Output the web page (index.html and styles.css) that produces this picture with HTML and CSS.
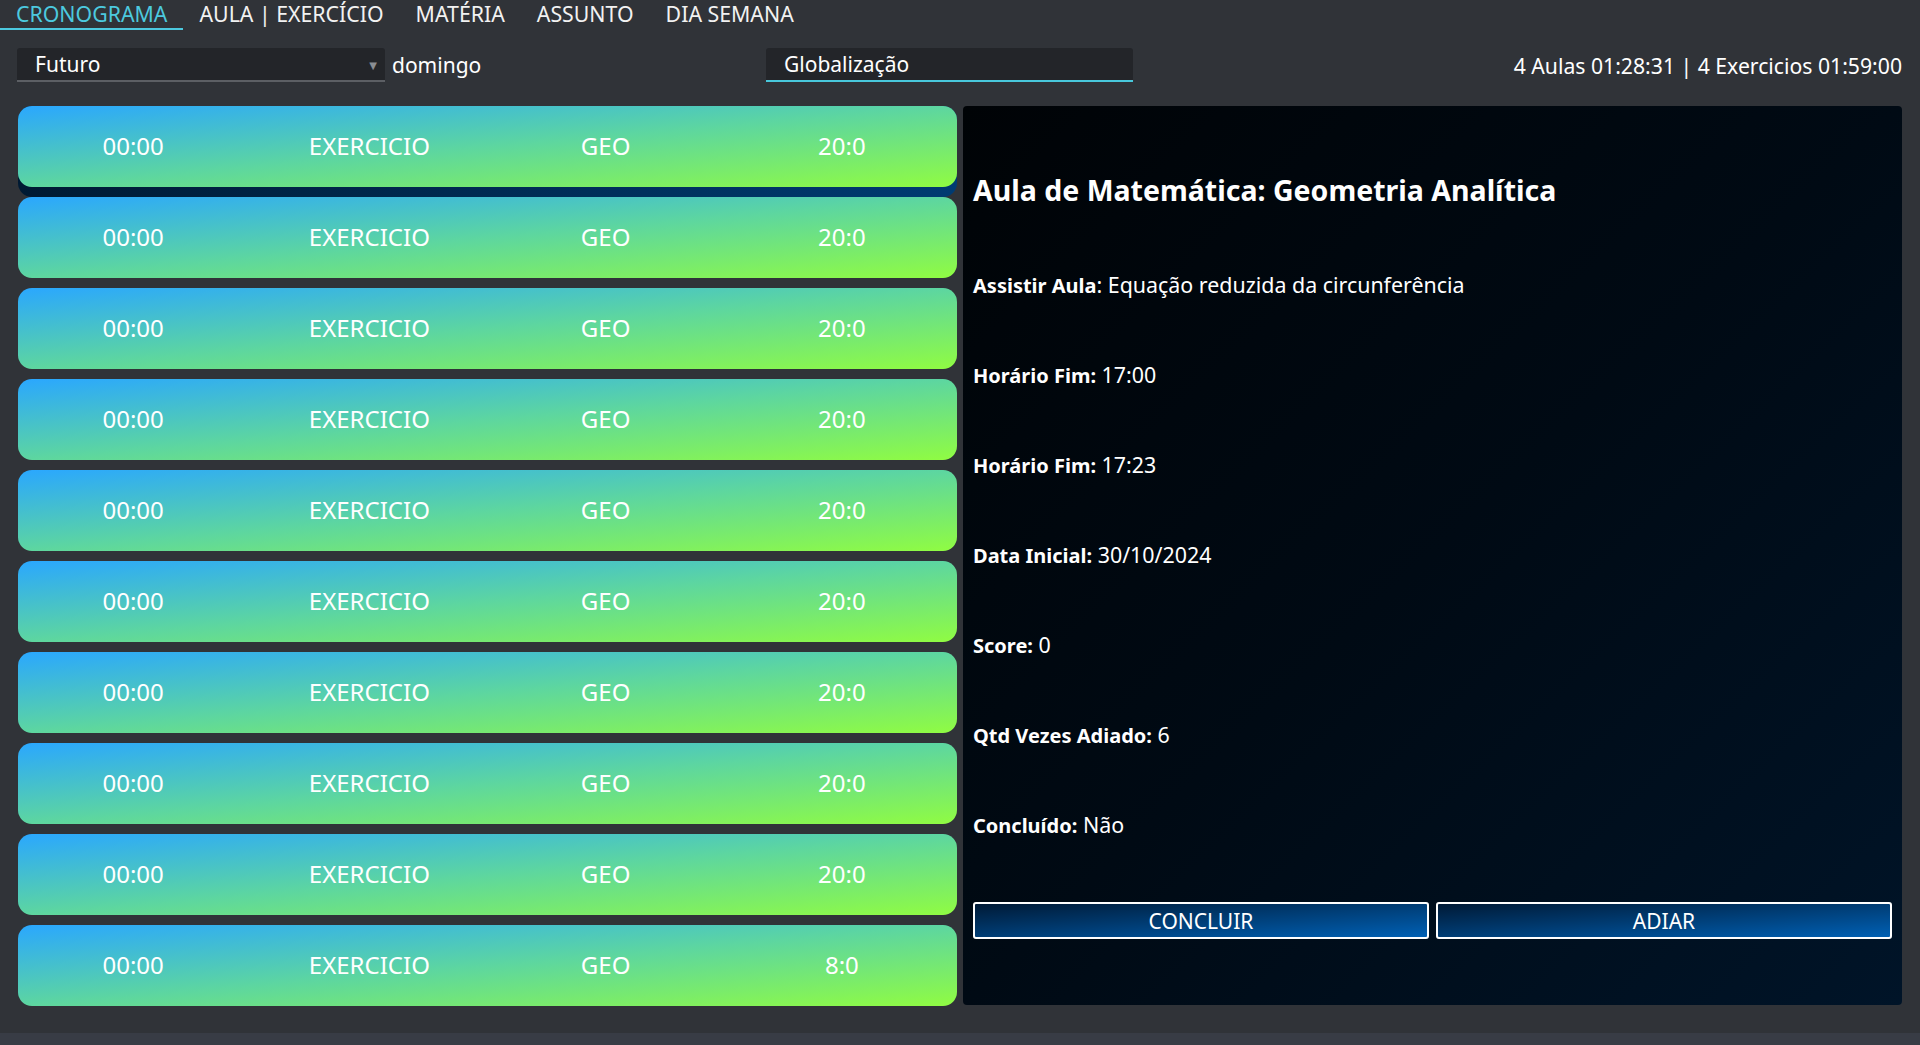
FILE: index.html
```html
<!DOCTYPE html>
<html lang="pt">
<head>
<meta charset="utf-8">
<title>Cronograma</title>
<link rel="stylesheet" href="styles.css">
</head>
<body>
<div class="app">
  <nav class="tabs">
    <div class="tab active">CRONOGRAMA</div>
    <div class="tab">AULA | EXERCÍCIO</div>
    <div class="tab">MATÉRIA</div>
    <div class="tab">ASSUNTO</div>
    <div class="tab">DIA SEMANA</div>
  </nav>
  <main class="page">
    <div class="filters">
      <div class="combo"><span>Futuro</span><span class="arrow">▼</span></div>
      <div class="day">domingo</div>
      <div class="field">Globalização</div>
      <div class="stats">4 Aulas 01:28:31 | 4 Exercicios 01:59:00</div>
    </div>
    <div class="content">
      <div class="list">
        <div class="item selected"><div class="card"><span>00:00</span><span>EXERCICIO</span><span>GEO</span><span>20:0</span></div></div>
        <div class="item"><div class="card"><span>00:00</span><span>EXERCICIO</span><span>GEO</span><span>20:0</span></div></div>
        <div class="item"><div class="card"><span>00:00</span><span>EXERCICIO</span><span>GEO</span><span>20:0</span></div></div>
        <div class="item"><div class="card"><span>00:00</span><span>EXERCICIO</span><span>GEO</span><span>20:0</span></div></div>
        <div class="item"><div class="card"><span>00:00</span><span>EXERCICIO</span><span>GEO</span><span>20:0</span></div></div>
        <div class="item"><div class="card"><span>00:00</span><span>EXERCICIO</span><span>GEO</span><span>20:0</span></div></div>
        <div class="item"><div class="card"><span>00:00</span><span>EXERCICIO</span><span>GEO</span><span>20:0</span></div></div>
        <div class="item"><div class="card"><span>00:00</span><span>EXERCICIO</span><span>GEO</span><span>20:0</span></div></div>
        <div class="item"><div class="card"><span>00:00</span><span>EXERCICIO</span><span>GEO</span><span>20:0</span></div></div>
        <div class="item"><div class="card"><span>00:00</span><span>EXERCICIO</span><span>GEO</span><span>8:0</span></div></div>
      </div>
      <section class="detail">
        <h1 class="title">Aula de Matemática: Geometria Analítica</h1>
        <div class="row"><b>Assistir Aula</b>: Equação reduzida da circunferência</div>
        <div class="row"><b>Horário Fim:</b> 17:00</div>
        <div class="row"><b>Horário Fim:</b> 17:23</div>
        <div class="row"><b>Data Inicial:</b> 30/10/2024</div>
        <div class="row"><b>Score:</b> 0</div>
        <div class="row"><b>Qtd Vezes Adiado:</b> 6</div>
        <div class="row"><b>Concluído:</b> Não</div>
        <div class="buttons">
          <button class="btn">CONCLUIR</button>
          <button class="btn">ADIAR</button>
        </div>
      </section>
    </div>
  </main>
  <footer class="status"></footer>
</div>
</body>
</html>
```
FILE: styles.css
```css
* { box-sizing: border-box; }
html, body { margin: 0; padding: 0; }
body {
  width: 1920px;
  height: 1045px;
  overflow: hidden;
  background: #303338;
  color: #ffffff;
  font-family: "Noto Sans", "DejaVu Sans", sans-serif;
}
.app {
  height: 1045px;
  display: flex;
  flex-direction: column;
}
.tabs {
  display: flex;
  height: 30px;
  flex: none;
}
.tab {
  padding: 0 16px;
  font-size: 21.3px;
  line-height: 27px;
  height: 30px;
  color: #f2f2f2;
  border-bottom: 2px solid transparent;
  white-space: nowrap;
}
.tab.active {
  color: #4cc9df;
  border-bottom-color: #4cc9df;
}
.page {
  flex: 1;
  padding: 18px 18px 17px 17px;
  display: flex;
  flex-direction: column;
}
.filters {
  display: flex;
  align-items: center;
  height: 34px;
  font-size: 21px;
}
.combo {
  width: 368px;
  height: 34px;
  background: #232529;
  border-radius: 3px 3px 0 0;
  border-bottom: 2px solid #5c5f64;
  display: flex;
  align-items: center;
  justify-content: space-between;
  padding: 0 8px 0 18px;
}
.arrow {
  font-size: 10px;
  color: #8a8d92;
  margin-top: 1px;
}
.day {
  width: 368px;
  margin-left: 7px;
}
.field {
  width: 367px;
  height: 34px;
  margin-left: 6px;
  background: #232529;
  border-radius: 3px 3px 0 0;
  border-bottom: 2px solid #48c8dc;
  padding: 0 18px;
  line-height: 32px;
}
.stats {
  margin-left: auto;
  margin-right: 0;
  font-size: 21.2px;
}
.content {
  margin-top: 24px;
  display: flex;
  gap: 6px;
  padding-left: 1px;
}
.list {
  width: 939px;
  display: flex;
  flex-direction: column;
}
.item {
  height: 91px;
  border-radius: 14px;
}
.item.selected {
  background: linear-gradient(to right, #001a33, #003b72);
}
.card {
  height: 81px;
  border-radius: 14px;
  background: linear-gradient(to bottom right, #2aa7ff 0%, #5dd6a0 50%, #90fc42 100%);
  display: grid;
  grid-template-columns: repeat(4, 1fr);
  column-gap: 6px;
  align-items: center;
  font-size: 24px;
  color: #ffffff;
}
.card span {
  text-align: center;
  margin-top: -2px;
}
.detail {
  width: 939px;
  height: 899px;
  border-radius: 4px;
  background: linear-gradient(to bottom right, #000306 0%, #000a14 50%, #001428 100%);
  padding: 40px 10px 0 10px;
  display: flex;
  flex-direction: column;
}
.title {
  margin: 0 0 5px 0;
  height: 90px;
  line-height: 88px;
  font-size: 28.5px;
  font-weight: 700;
}
.row {
  height: 90px;
  line-height: 88px;
  font-size: 21.4px;
}
.row b {
  font-weight: 700;
  font-size: 20px;
}
.buttons {
  margin-top: 31px;
  display: flex;
  gap: 7px;
}
.btn {
  flex: 1;
  height: 37px;
  border: 2px solid #ffffff;
  border-radius: 3px;
  background: linear-gradient(to bottom right, #001a36, #0060b4);
  color: #ffffff;
  font-family: "Noto Sans", "DejaVu Sans", sans-serif;
  font-size: 21px;
  padding: 0;
}
.status {
  height: 22px;
  flex: none;
  background: #383c45;
}
```
